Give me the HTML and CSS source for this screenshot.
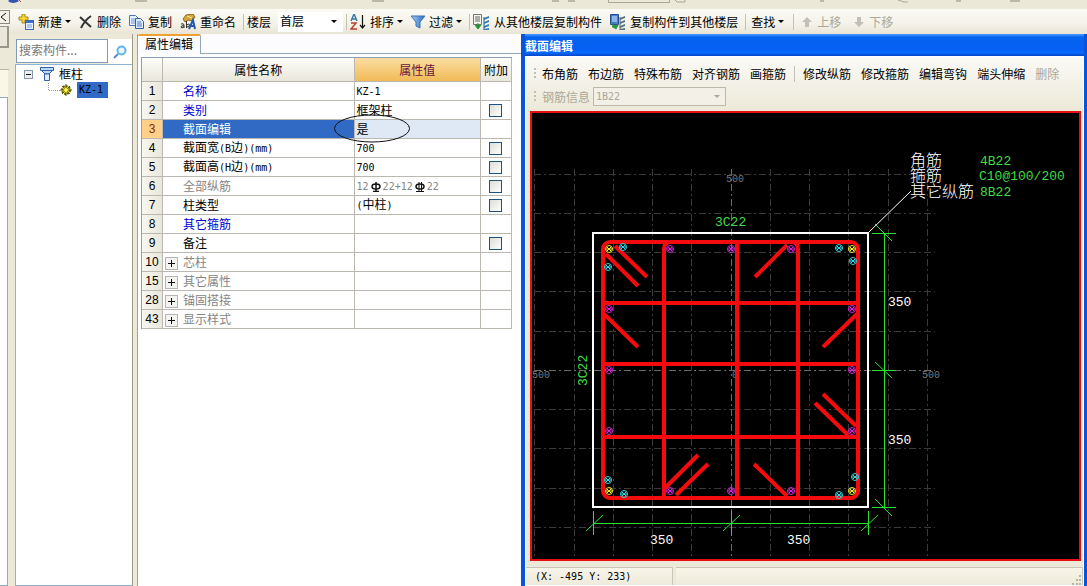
FILE: index.html
```html
<!DOCTYPE html>
<html lang="zh-CN">
<head>
<meta charset="utf-8">
<title>属性编辑</title>
<link rel="stylesheet" href="styles.css">
</head>
<body>
<div class="app">
  <svg class="upper-strip" aria-hidden="true">
    <path d="M9 0q4 3 9 0" fill="none" stroke="#3454b4" stroke-width="3"/>
    <path d="M19 0l2 2" stroke="#b04030"/>
    <path d="M135 1h12M372 1h12M552 1h7M568 1h7M820 1h4M956 1h5M1010 1h10" stroke="#bbb8a8" stroke-width="2"/>
    <path d="M608.500 0v2.500h61V0M675 0l2 2h8v-2M898 0l6 2h4" fill="none" stroke="#aaa797"/>
  </svg>
  <header class="toolbar">
    <button class="tool"><svg width="16" height="16"><path d="M4 0h3v3h3v3H7v3H4V6H1V3h3z" fill="#f5d736" stroke="#a78b1c"/><rect x="7.500" y="6.500" width="8" height="9" fill="#e8f1ff" stroke="#4267b5"/><path d="M8 8h7" stroke="#3d6cd0" stroke-width="2"/><path d="M9 11h5M9 13h5" stroke="#78a0df"/></svg><span>新建</span><i class="caret"></i></button>
    <button class="tool"><svg width="14" height="14"><path d="M1 2l11 10M12 1Q6 5 2 13" fill="none" stroke="#333" stroke-width="2"/></svg><span>删除</span></button>
    <button class="tool"><svg width="15" height="14"><path d="M.5.500h6l3 3v7h-9z" fill="#e8f1ff" stroke="#4c74b5"/><path d="M2 4h4M2 6h4M2 8h4" stroke="#6c94d0"/><path d="M6.500 3.500h5l3 3v7h-8z" fill="#dce9ff" stroke="#315ea8"/><path d="M8 7h4M8 9h5M8 11h5" stroke="#4c7bc8"/></svg><span>复制</span></button>
    <button class="tool"><svg width="16" height="16"><path d="M3 5l3-4 7-1 2 3-3 4-4-1-3 2z" fill="#d8a538" stroke="#8b6a25"/><path d="M7 2l5 2" stroke="#fff0a0"/><path d="M1 10q3-1 3 1v3M4 12q-3-1-3 1t3 0" fill="none" stroke="#333"/><path d="M6.500 7v7M6.500 11q3-2 3 0t-3 2" stroke="#333" fill="none"/><path d="M9 15l4-9 2 9M10 12h5" fill="none" stroke="#245bae" stroke-width="2"/></svg><span>重命名</span></button>
    <i class="sep"></i>
    <label class="floor-label" for="floor">楼层</label>
    <span class="picker floor"><select id="floor"><option>首层</option></select></span>
    <i class="sep"></i>
    <button class="tool"><svg width="16" height="16"><path d="M1 7l3-7 3 7M2 5h4" fill="none" stroke="#3b79a2" stroke-width="1.500"/><path d="M1 9h5l-5 6h6" fill="none" stroke="#b84232" stroke-width="1.500"/><path d="M12.500 1v12M10 11l2.500 3 2.500-3" fill="none" stroke="#111" stroke-width="1.200"/></svg><span>排序</span><i class="caret"></i></button>
    <button class="tool"><svg width="14" height="14"><defs><linearGradient id="funnel"><stop stop-color="#a8cffb"/><stop offset="1" stop-color="#2869b8"/></linearGradient></defs><path d="M0 1h14L9 7v6l-4-2V7z" fill="url(#funnel)" stroke="#3973b6"/></svg><span>过滤</span><i class="caret"></i></button>
    <i class="sep"></i>
    <button class="tool"><svg width="17" height="16"><path d="M.5.500h8v10h-8z" fill="#f5f5ee" stroke="#777"/><path d="M2 3h5M2 5h5M2 7h5" stroke="#666"/><path d="M5 9v5M2 11l3 4 3-4z" fill="#299341" stroke="#299341"/><path d="M11 4l5-2v2l-5 2zm0 4l5-2v2l-5 2zm0 4l5-2v2l-5 2zm0 3l5-1v2h-5z" fill="#347fbd"/><path d="M11 3v13" stroke="#245f99"/></svg><span>从其他楼层复制构件</span></button>
    <button class="tool"><svg width="16" height="16"><path d="M.5.500h8v10h-8z" fill="#477fce" stroke="#244d91"/><path d="M2 3h5M2 5h5M2 7h5" stroke="#d8e9ff"/><path d="M3 8v6M2 12l4 3 2-4z" fill="#299341" stroke="#299341"/><path d="M10 4l5-2v2l-5 2zm0 4l5-2v2l-5 2zm0 4l5-2v2l-5 2zm0 3l5-1v2h-5z" fill="#587083"/><path d="M10 3v13" stroke="#51626e"/></svg><span>复制构件到其他楼层</span></button>
    <i class="sep"></i>
    <button class="tool find"><span>查找</span><i class="caret"></i></button>
    <i class="sep"></i>
    <button class="tool" disabled><svg width="14" height="14"><path d="M3 7l5-5 5 5h-3v5H6V7z" fill="#c1bfb6"/></svg><span>上移</span></button>
    <button class="tool" disabled><svg width="14" height="14"><path d="M3 7l5 5 5-5h-3V2H6v5z" fill="#c1bfb6"/></svg><span>下移</span></button>
  </header>

  <div class="workspace">
    <aside class="edge">
      <button class="edge-collapse" aria-label="收起"><svg width="8" height="10"><path d="M6 1L1 5l5 4" fill="none" stroke="#111"/></svg></button>
      <div class="edge-tab"></div><div class="edge-gap"></div><div class="edge-cream"></div><div class="edge-page"></div>
    </aside>

    <aside class="tree-panel">
      <div class="search">
        <input type="text" placeholder="搜索构件..." aria-label="搜索构件">
        <button aria-label="搜索"><svg width="14" height="14"><circle cx="8.500" cy="5.500" r="4" fill="#e6f7ff" stroke="#62b5e8" stroke-width="2"/><path d="M5 9l-4 4" stroke="#4b8ed1" stroke-width="2"/></svg></button>
      </div>
      <div class="tree">
        <div class="tree-root"><svg width="9" height="9"><rect x=".5" y=".5" width="8" height="8" fill="#eee" stroke="#8797a8"/><path d="M2 4.500h5" stroke="#111"/></svg><svg width="14" height="14"><path d="M.5.500h13v3h-13zM2 4l3 3h4l3-3" fill="#b8d8fa" stroke="#315ea5"/><path d="M4.500 7h5v6.500h-5z" fill="#deedff" stroke="#315ea5"/></svg><span>框柱</span></div>
        <div class="tree-leaf"><svg width="12" height="14"><path d="M.5 0v7.500H12" fill="none" stroke="#999" stroke-dasharray="1 1"/></svg><svg width="12" height="12"><circle cx="6" cy="6" r="4" fill="#e6db28" stroke="#635f08" stroke-width="2" stroke-dasharray="2 1"/><path d="M6 0v12M0 6h12M2 2l8 8M10 2l-8 8" stroke="#5e5b08"/><circle cx="6" cy="6" r="2" fill="#fff54d"/></svg><span class="mono">KZ-1</span></div>
      </div>
    </aside>

    <main class="properties">
      <div class="tabs"><button class="tab">属性编辑</button></div>
      <div class="sheet">
        <table>
          <colgroup><col class="c-num"><col class="c-name"><col class="c-value"><col class="c-add"></colgroup>
          <thead><tr><th></th><th>属性名称</th><th class="active">属性值</th><th>附加</th></tr></thead>
          <tbody>
            <tr><th>1</th><td class="name link">名称</td><td class="mono">KZ-1</td><td></td></tr>
            <tr><th>2</th><td class="name link">类别</td><td>框架柱</td><td class="check"><input type="checkbox" aria-label="类别附加"></td></tr>
            <tr class="selected"><th>3</th><td class="name">截面编辑</td><td class="marked">是<svg class="ring" width="78" height="29" aria-hidden="true"><ellipse cx="39" cy="14.500" rx="37.500" ry="13.500" fill="none" stroke="#111"/></svg></td><td></td></tr>
            <tr><th>4</th><td class="name">截面宽<span class="mono">(B</span>边<span class="mono">)(mm)</span></td><td class="mono">700</td><td class="check"><input type="checkbox" aria-label="截面宽附加"></td></tr>
            <tr><th>5</th><td class="name">截面高<span class="mono">(H</span>边<span class="mono">)(mm)</span></td><td class="mono">700</td><td class="check"><input type="checkbox" aria-label="截面高附加"></td></tr>
            <tr class="muted"><th>6</th><td class="name">全部纵筋</td><td class="mono"><span class="bars">12<svg class="grade" width="14" height="10"><path d="M7 0v9M4 9.500h6" stroke="#111" stroke-width="1.500"/><ellipse cx="7" cy="4.500" rx="4" ry="2.500" fill="none" stroke="#111" stroke-width="1.500"/></svg>22+12<svg class="grade" width="14" height="10"><path d="M6 0v9M8.500 0v9M3 9.500h8" stroke="#111"/><ellipse cx="7" cy="4.500" rx="4" ry="2.500" fill="none" stroke="#111" stroke-width="1.500"/></svg>22</span></td><td class="check"><input type="checkbox" aria-label="全部纵筋附加"></td></tr>
            <tr><th>7</th><td class="name">柱类型</td><td><span class="mono">(</span>中柱<span class="mono">)</span></td><td class="check"><input type="checkbox" aria-label="柱类型附加"></td></tr>
            <tr><th>8</th><td class="name link">其它箍筋</td><td></td><td></td></tr>
            <tr><th>9</th><td class="name">备注</td><td></td><td class="check"><input type="checkbox" aria-label="备注附加"></td></tr>
            <tr class="muted"><th>10</th><td class="group"><button class="expand" aria-label="展开芯柱"></button>芯柱</td><td></td><td></td></tr>
            <tr class="muted"><th>15</th><td class="group"><button class="expand" aria-label="展开其它属性"></button>其它属性</td><td></td><td></td></tr>
            <tr class="muted"><th>28</th><td class="group"><button class="expand" aria-label="展开锚固搭接"></button>锚固搭接</td><td></td><td></td></tr>
            <tr class="muted"><th>43</th><td class="group"><button class="expand" aria-label="展开显示样式"></button>显示样式</td><td></td><td></td></tr>
          </tbody>
        </table>
      </div>
    </main>

    <section class="editor">
      <h1 class="editor-title">截面编辑</h1>
      <div class="editor-body">
        <div class="commands">
          <div class="row"><i class="grip"></i><button>布角筋</button><button>布边筋</button><button>特殊布筋</button><button>对齐钢筋</button><button>画箍筋</button><i class="sep"></i><button>修改纵筋</button><button>修改箍筋</button><button>编辑弯钩</button><button>端头伸缩</button><button disabled>删除</button></div>
          <div class="row rebar-info"><i class="grip"></i><label for="rebar">钢筋信息</label><span class="picker rebar"><select id="rebar" disabled><option>1B22</option></select></span></div>
        </div>
        <div class="canvas">
          <svg role="img" aria-label="柱截面配筋图">
            <defs>
              <g id="bar" fill="none" stroke="currentColor"><circle r="3.500"/><path d="M-2-2L2 2M2-2L-2 2M-3 0h6"/></g>
            </defs>
            <g transform="translate(-532 -112)">
              <g class="grid">
                <path d="M534.500 168v391M574.500 168v391M613.500 168v391M652.500 168v391M691.500 168v391M770.500 168v391M809.500 168v391M848.500 168v391M888.500 168v391M927.500 168v391"/>
                <path d="M534 173.500h401M534 212.500h401M534 251.500h401M534 290.500h401M534 330.500h401M534 408.500h401M534 447.500h401M534 487.500h401M534 526.500h401"/>
                <path class="axis" d="M731.500 168v391M534 369.500h401"/>
              </g>
              <g class="axis-text"><text x="726" y="181">500</text><text x="532" y="377">500</text><text x="922" y="377">500</text><text x="732" y="377">0</text></g>
              <rect x="593" y="232" width="275" height="274" fill="none" stroke="#fff" stroke-width="2"/>
              <g class="stirrups">
                <rect x="603" y="241" width="255" height="256" rx="7"/>
                <path d="M664 497V248q0-7 7-7M737 241v256M791 241q7 0 7 7v249M603 302h255M603 363h255M603 436h255"/>
                <path d="M606 253l32 32M615 245l32 31M787 244l-32 32M604 313l34 33M857 313l-34 33M823 393l33 32M815 402l33 32M698 454l-33 33M708 463l-32 31M754 463l33 32"/>
              </g>
              <g color="#d324d8"><use href="#bar" x="670" y="248"/><use href="#bar" x="731" y="248"/><use href="#bar" x="791" y="248"/><use href="#bar" x="609" y="308"/><use href="#bar" x="852" y="308"/><use href="#bar" x="609" y="369"/><use href="#bar" x="852" y="369"/><use href="#bar" x="609" y="430"/><use href="#bar" x="852" y="430"/><use href="#bar" x="670" y="490"/><use href="#bar" x="731" y="490"/><use href="#bar" x="791" y="490"/></g>
              <g color="#f5ef2e"><use href="#bar" x="609" y="248"/><use href="#bar" x="852" y="248"/><use href="#bar" x="609" y="490"/><use href="#bar" x="852" y="490"/></g>
              <g color="#35d5e2"><use href="#bar" x="623" y="246"/><use href="#bar" x="608" y="266"/><use href="#bar" x="839" y="247"/><use href="#bar" x="853" y="260"/><use href="#bar" x="608" y="479"/><use href="#bar" x="624" y="493"/><use href="#bar" x="855" y="476"/><use href="#bar" x="839" y="494"/></g>
              <g class="dims">
                <path d="M884.500 232v275M872 232.500h24M872 369.500h24M872 506.500h24M593 522.500h275M593.500 510v24M731.500 510v24M868.500 510v24"/>
                <path d="M875 223l17 17M875 361l17 16M875 498l17 17M586 530l17-16M723 530l17-16M861 530l17-16"/>
              </g>
              <path d="M868 232l43-42" stroke="#fff"/>
              <g class="code"><text x="715" y="225">3C22</text><text transform="translate(587 385) rotate(-90)">3C22</text><text x="980" y="164">4B22</text><text x="979" y="179">C10@100/200</text><text x="980" y="195">8B22</text></g>
              <g class="size"><text x="888" y="305">350</text><text x="888" y="443">350</text><text x="650" y="543">350</text><text x="787" y="543">350</text></g>
              <g class="caption"><text x="910" y="165">角筋</text><text x="910" y="180">箍筋</text><text x="910" y="196">其它纵筋</text></g>
            </g>
          </svg>
        </div>
        <footer class="status"><span class="coords mono">(X: -495 Y: 233)</span><span class="rest"><svg width="10" height="10"><path d="M7 0h2v2H7zM4 4h2v2H4zM7 4h2v2H7zM0 8h2v2H0zM4 8h2v2H4zM7 8h2v2H7z" fill="#b8b4a2"/></svg></span></footer>
      </div>
    </section>
  </div>
</div>
</body>
</html>
```

FILE: styles.css
```css
* { box-sizing: border-box; }
body {
  margin: 0;
  font: 12px/16px "Noto Sans CJK SC", sans-serif;
  color: #000;
  background: #ece9d8;
}
button, select, input { font: inherit; color: inherit; }
button { border: 0; padding: 0; background: none; white-space: nowrap; }
button:disabled { color: #aaa899; }
svg { display: block; flex: none; }
.mono { font-family: "DejaVu Sans Mono", monospace; font-size: 10px; }
.app { height: 100vh; display: flex; flex-direction: column; overflow: hidden; }
.upper-strip { width: 100%; height: 9px; background: #ebe8d8; }

.toolbar {
  display: flex;
  align-items: center;
  height: 25px;
  padding-left: 18px;
  background: linear-gradient(#fbfaf5, #f4f2e8 60%, #e8e5d6);
}
.tool { display: flex; align-items: center; gap: 4px; margin-right: 8px; }
.tool:disabled { padding-left: 2px; }
.find { padding: 0 2px; }
.caret { margin-left: -1px; border: 3px solid transparent; border-top-color: #000; border-bottom: 0; }
.sep { width: 1px; height: 16px; margin: 0 3px 0 -1px; background: #c5c2b3; flex: none; }
.floor-label { margin-right: 7px; }
.picker { position: relative; display: flex; }
.picker select { appearance: none; width: 100%; border: 0; border-radius: 0; outline: 0; }
.picker::after {
  content: "";
  position: absolute;
  right: 6px;
  top: 8px;
  border: 3px solid transparent;
  border-top-color: currentColor;
  border-bottom: 0;
}
.floor { width: 65px; margin-right: 4px; }
.floor select { height: 20px; padding: 0 2px 2px; background: #fff; }

.workspace { flex: 1; min-height: 0; display: flex; }
.edge { width: 15px; flex: none; display: flex; flex-direction: column; background: #ece9d8; }
.edge-collapse { width: 10px; height: 14px; margin-top: -24px; border: 1px solid #8d8a7d; border-left: 0; background: #f3f1e7; }
.edge-tab { width: 9px; height: 22px; margin-top: 2px; border: solid #98968a; border-width: 1px 2px 2px 0; background: #e9e6da; }
.edge-gap { height: 22px; width: 9px; border-bottom: 1px solid #b9b6a8; }
.edge-cream { height: 27px; width: 8px; background: #fbf7e6; }
.edge-page { flex: 1; width: 8px; border: 1px solid #8eabc4; border-left: 0; background: #fff; }

.tree-panel { width: 118px; flex: none; display: flex; flex-direction: column; border-right: 1px solid #9b9a8d; padding-top: 5px; }
.search { display: flex; padding-left: 1px; height: 25px; }
.search input { width: 92px; height: 24px; padding: 0 2px 4px; border: 1px solid #7f9db9; border-radius: 0; background: #fff; }
.search input::placeholder { color: #777; opacity: 1; }
.search button { flex: 1; display: grid; place-items: center; background: #fff; }
.tree { flex: 1; border: 1px solid #8db2d8; border-right: 0; background: #fff; }
.tree-root, .tree-leaf { display: flex; align-items: center; height: 16px; }
.tree-root { padding-left: 8px; margin-top: 1px; gap: 5px; }
.tree-root svg + svg { margin-left: 2px; }
.tree-leaf { padding-left: 32px; }
.tree-leaf span { margin-left: 5px; padding: 0 5px 0 2px; background: #316ac5; }

.properties { width: 388px; flex: none; padding-left: 4px; display: flex; flex-direction: column; background: #ece9d8; }
.tabs { height: 20px; background: #fcfcfe; border: solid #91a7b4; border-width: 0 0 1px 1px; }
.tab {
  width: 63px;
  height: 20px;
  padding: 0 6px 2px 6px;
  background: #fcfcfe;
  border-top: 2px solid #f0a030;
  border-right: 1px solid #91a7b4;
  border-radius: 2px 2px 0 0;
}
.sheet { flex: 1; background: #fff; border-left: 1px solid #91a7b4; padding: 3px 0 0 3px; }
table { width: 371px; border-collapse: separate; border-spacing: 0; table-layout: fixed; border: solid #8aa1b5; border-width: 1px 0 0 1px; }
.c-num { width: 21px; }
.c-name { width: 191px; }
.c-value { width: 126px; }
.c-add { width: 31px; }
th, td { height: 19px; padding: 0 2px; border: solid #bab8b0; border-width: 0 1px 1px 0; line-height: 16px; text-align: left; white-space: nowrap; }
th { font-weight: 400; text-align: center; padding: 0; background: linear-gradient(#fdfcf8, #e9e7db); }
thead th { height: 24px; }
thead .active { color: #6c143c; background: linear-gradient(#fcdda0, #f0bb58); }
tbody th { font-family: "Liberation Sans", sans-serif; background: linear-gradient(90deg, #f8f7f0, #e9e7db); }
td.mono { padding-top: 2px; }
.name { padding-left: 20px; }
.link { color: #0000d0; }
.muted td { color: #858585; }
.selected th { background: #ffd08a; color: #803000; }
.selected .name { background: #316ac5; color: #fff; }
.marked { position: relative; background: #dfe8f5; }
.ring { position: absolute; left: -22px; top: -6px; color: #111; }
.bars { display: flex; align-items: center; }
.check { padding: 0; text-align: center; }
.check input { appearance: none; display: block; width: 13px; height: 13px; margin: 0 auto; border: 1px solid #1c5180; background: linear-gradient(135deg, #dcdcd7, #fff); }
.group { padding-left: 2px; }
.expand { width: 13px; height: 13px; margin-right: 5px; vertical-align: middle; border: 1px solid #b5b5b5; background: linear-gradient(#111, #111) center / 7px 1px no-repeat, linear-gradient(#111, #111) center / 1px 7px no-repeat, #f3f3ef; }

.editor { flex: 1; min-width: 0; display: flex; flex-direction: column; padding: 0 3px 0 4px; background: #0855dd; }
.editor-title { margin: 0; height: 22px; font: 700 12px/24px "Noto Sans CJK SC", sans-serif; color: #fff; background: linear-gradient(#4c9cff, #0463ed 15%, #0560f3 70%, #0a6cff 85%, #0344c4); }
.editor-body { flex: 1; min-height: 0; display: flex; flex-direction: column; background: #ece9d8; border: 1px solid #fff; border-top: 2px solid #fff; }
.commands { padding: 4px 0 3px 8px; background: linear-gradient(#faf9f5, #ece9d8); }
.row { display: flex; align-items: center; gap: 10px; height: 23px; }
.commands .sep { margin: 0 -2px; }
.grip { width: 2px; height: 12px; margin-right: -4px; background: repeating-linear-gradient(#c1beb0 0 2px, transparent 2px 4px); flex: none; }
.rebar-info { color: #aaa899; gap: 10px; }
.rebar { width: 133px; margin-left: -7px; }
.rebar select { height: 19px; padding: 0 2px; border: 1px solid #bcb9a9; background: #f2f0e7; color: #aaa899; opacity: 1; font-family: "DejaVu Sans Mono", monospace; font-size: 10px; }
.canvas { flex: 1; min-height: 0; margin: 0 2px 0 4px; border: 2px solid #e60f14; background: #000; }
.canvas svg { width: 100%; height: 100%; }
.grid { fill: none; stroke: #3a3a3a; stroke-dasharray: 7 3 2 3; }
.axis { stroke: #6a6a6a; }
.axis-text { font: 10px "Liberation Mono", monospace; fill: #777; }
.stirrups { fill: none; stroke: #f50a0d; stroke-width: 4; }
.dims { fill: none; stroke: #28e430; }
.code { font: 13px "Liberation Mono", monospace; fill: #40dc46; }
.size { font: 13px "Liberation Mono", monospace; fill: #fff; }
.caption { font: 300 16px/1 "Noto Sans CJK SC", sans-serif; fill: #fff; }
.status { display: flex; gap: 3px; height: 24px; padding-top: 6px; flex: none; }
.status span { border: solid #c9c6b7; border-width: 1px 1px 0 0; background: linear-gradient(#f8f5e9, #eeebdc); }
.status .coords { width: 147px; padding-left: 9px; line-height: 18px; }
.status .rest { flex: 1; display: flex; justify-content: flex-end; align-items: flex-end; }
```
